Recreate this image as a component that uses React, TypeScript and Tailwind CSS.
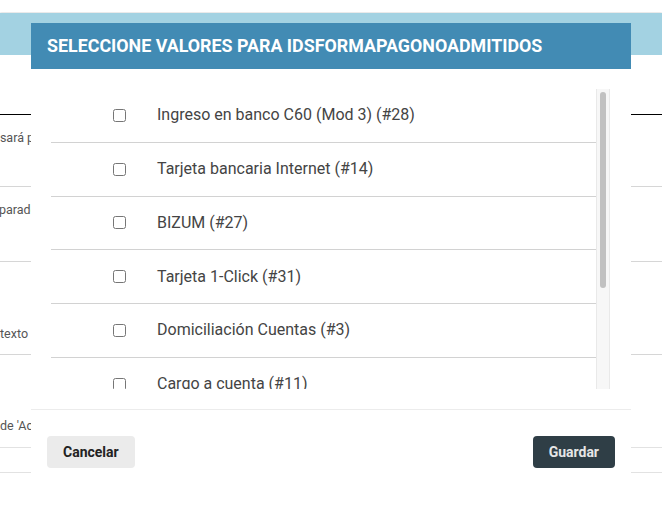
import React from "react";

const opciones = [
  "Ingreso en banco C60 (Mod 3) (#28)",
  "Tarjeta bancaria Internet (#14)",
  "BIZUM (#27)",
  "Tarjeta 1-Click (#31)",
  "Domiciliación Cuentas (#3)",
  "Cargo a cuenta (#11)",
  "Efectivo (#1)",
];

export default function App() {
  return (
    <div className="relative h-[509px] w-[662px] overflow-hidden bg-white font-['Roboto','Liberation_Sans',sans-serif]">
      {/* Background page under the modal */}
      <div className="flex flex-col">
        <div className="h-[12px] bg-white shadow-[0_1px_2px_rgba(0,0,0,0.12)]" />
        <div className="mt-px h-[42px] bg-[#a3d2e2]" />
        <div className="h-[59px]" />
        <div className="flex h-[72px] items-start border-t border-black pt-[14px] text-[12.5px] text-[#555]">
          <span className="-ml-[7px] whitespace-nowrap">usará para</span>
        </div>
        <div className="flex h-[75px] items-start border-t border-[#d6d6d6] pt-[14px] text-[12.5px] text-[#555]">
          <span className="-ml-[1px] whitespace-nowrap">parado</span>
        </div>
        <div className="flex h-[93px] items-end border-t border-[#d6d6d6] pb-[10px] text-[12.5px] text-[#555]">
          <span className="whitespace-nowrap">texto</span>
        </div>
        <div className="flex h-[93px] items-end border-t border-[#d6d6d6] pb-[11px] text-[12.5px] text-[#555]">
          <span className="whitespace-nowrap">de 'Acceso</span>
        </div>
        <div className="h-[25px] border-t border-[#e2e2e2]" />
        <div className="border-t border-[#e2e2e2]" />
      </div>

      {/* Modal */}
      <div className="absolute left-[31px] top-[23px] w-[600px] bg-white">
        <div className="flex h-[46px] items-center bg-[#428bb4] px-[16px]">
          <h2 className="text-[17.85px] font-bold text-white">
            SELECCIONE VALORES PARA IDSFORMAPAGONOADMITIDOS
          </h2>
        </div>

        <div className="mt-[20px] flex h-[300px] pl-[20px] pr-[21px]">
          <div className="flex-1 overflow-hidden">
            {opciones.map((o) => (
              <label
                key={o}
                className="flex h-[53.75px] items-center border-b border-[#d2d2d2] pl-[62px] text-[16px] text-[#444]"
              >
                <input type="checkbox" className="h-[13px] w-[13px]" />
                <span className="ml-[31px]">{o}</span>
              </label>
            ))}
          </div>
          <div className="w-[14px] border-x border-[#e9e9e9] bg-[#f7f7f7] px-[3px] pt-[3px]">
            <div className="h-[196px] rounded-full bg-[#c1c1c1]" />
          </div>
        </div>

        <div className="mt-[20px] flex items-center justify-between border-t border-[#ececec] px-[16px] pb-[22px] pt-[26px]">
          <button className="h-[32px] rounded-[4px] bg-[#ebebeb] px-[16px] text-[14px] font-bold text-[#222]">
            Cancelar
          </button>
          <button className="h-[32px] rounded-[4px] bg-[#2f3e46] px-[16px] text-[14px] font-bold text-[#e6e6e6]">
            Guardar
          </button>
        </div>
      </div>
    </div>
  );
}
